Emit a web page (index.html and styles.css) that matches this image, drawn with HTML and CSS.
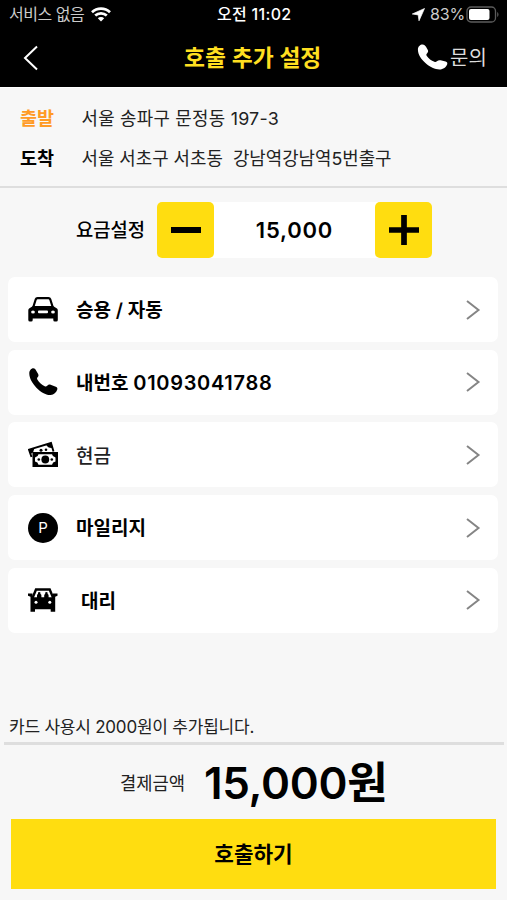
FILE: index.html
```html
<!DOCTYPE html>
<html lang="ko">
<head>
<meta charset="utf-8">
<title>호출 추가 설정</title>
<link rel="stylesheet" href="styles.css">
</head>
<body>
<svg class="defs" width="0" height="0" aria-hidden="true">
  <symbol id="phone" viewBox="0 0 30 26">
    <path d="M.4 5.500C.4 2.500 2.800.5 5 .5c1.800 0 2.700 1 3.500 2.300l1.700 3c.8 1.500.4 2.600-.7 3.700-.8.800-.8 1.500-.2 2.400 1.700 2.500 4.500 4.800 7.600 5.900 1 .4 1.700.2 2.500-.5 1.200-1 2.200-1.400 3.700-1l5 1.200c1.500.4 2 1.500 1.600 2.700-.9 2.800-4 5.300-7.700 5.300C13.500 25.300.4 15.200.4 5.500z"/>
  </symbol>
  <symbol id="chevron" viewBox="0 0 16 22">
    <path d="M2 2l11.500 9L2 20" fill="none" stroke="#858585" stroke-width="2"/>
  </symbol>
</svg>
<header class="top">
  <div class="status">
    <span class="carrier">서비스 없음</span>
    <svg class="wifi" width="20" height="15" viewBox="0 0 20 15">
      <path d="M1 5.300a13 13 0 0 1 18 0M4.200 8.600a8.400 8.400 0 0 1 11.600 0" fill="none" stroke="#fff" stroke-width="2.700"/>
      <path d="M6.800 11.300a4.600 4.600 0 0 1 6.400 0L10 14.600z" fill="#fff"/>
    </svg>
    <span class="clock">오전 11:02</span>
    <svg class="locate" width="13" height="13" viewBox="0 0 13 13"><path d="M12.500.5L.3 6l5.900.9.800 5.900z" fill="#fff" stroke="#fff" stroke-width=".7"/></svg>
    <span class="percent">83%</span>
    <svg class="battery" width="34" height="17" viewBox="0 0 34 17">
      <rect x="1" y="1" width="28.500" height="15" rx="4" fill="none" stroke="#5c5c5c" stroke-width="1.300"/>
      <rect x="3" y="3" width="20.500" height="11" rx="2" fill="#fff"/>
      <path d="M31.200 6v5c1.700-.8 1.700-4.200 0-5z" fill="#5c5c5c"/>
    </svg>
  </div>
  <div class="nav">
    <svg class="back" width="16" height="26" viewBox="0 0 16 26"><path d="M14 1.500L2 13l12 11.500" fill="none" stroke="#fff" stroke-width="2"/></svg>
    <h1 class="title">호출 추가 설정</h1>
    <svg class="call" width="31" height="26" fill="#fff"><use href="#phone"/></svg>
    <span class="ask">문의</span>
  </div>
</header>
<section class="route">
  <div class="stop"><b class="tag from">출발</b><span class="place start">서울 송파구 문정동 197-3</span></div>
  <div class="stop"><b class="tag">도착</b><span class="place">서울 서초구 서초동&nbsp; 강남역강남역5번출구</span></div>
</section>
<section class="fare">
  <span class="fare-label">요금설정</span>
  <div class="stepper">
    <button class="step"><svg width="32" height="32"><path d="M1 16h30" stroke="#000" stroke-width="6"/></svg></button>
    <span class="amount">15,000</span>
    <button class="step"><svg width="32" height="32"><path d="M1 16h30M16 1v30" stroke="#000" stroke-width="5.700"/></svg></button>
  </div>
</section>
<main class="options">
  <div class="card">
    <svg class="icon" width="30" height="30" viewBox="0 0 30 30">
      <path d="M5 13L7.700 4.500Q8.200 3.200 9.500 3.200h11q1.300 0 1.800 1.300L25 13" fill="none" stroke="#000" stroke-width="2.200"/>
      <path d="M5 11h20l4 2.500q.8.600.8 2v9.500q0 1.500-1.500 1.500h-1.500q-1.500 0-1.500-1.500v-1.500H4.700V25q0 1.500-1.500 1.500H2Q.3 26.500.3 25v-9.500q0-1.400.8-2z"/>
      <rect x="10" y="15.500" width="10" height="2.800" rx="1" fill="#fff"/>
      <ellipse cx="5" cy="17" rx="1.900" ry="1.600" fill="#fff"/><ellipse cx="25" cy="17" rx="1.900" ry="1.600" fill="#fff"/>
    </svg>
    <span class="label car">승용 / 자동</span>
    <svg class="go" width="16" height="22"><use href="#chevron"/></svg>
  </div>
  <div class="card">
    <svg class="icon" width="30" height="30" viewBox="0 0 30 30">
      <path d="M1.300 6.500C1.300 3.500 3.300 1.300 5.300 1.300c1.300 0 1.900.8 2.500 1.700l2.200 3.800c.8 1.400.6 2.500-.4 3.500-.7.800-.7 1.400-.1 2.400 1.700 2.700 4.200 5 7.200 6.500 1 .5 1.700.4 2.500-.4 1.100-1.100 2-1.500 3.400-1l5.200 2c1.500.6 1.900 1.700 1.400 3-1 2.700-3.300 4.900-6.500 5.200C14.300 28.800 1.300 16 1.300 6.500z"/>
    </svg>
    <span class="label mynum">내번호 <span class="digits">01093041788</span></span>
    <svg class="go" width="16" height="22"><use href="#chevron"/></svg>
  </div>
  <div class="card">
    <svg class="icon" width="30" height="30" viewBox="0 0 30 30">
      <path d="M3.500 17L1 9.700 23 3l2.500 8.500" fill="#fff" stroke="#000" stroke-width="1.900"/>
      <path d="M1 9.500l5.500-1.500-1.500 4.500L2.500 14zM18 4.500l5-1.500 1.500 5q-4.500.5-6.500-3.500z"/>
      <circle cx="13" cy="10.300" r="1.500"/><circle cx="18" cy="9.700" r="1.300"/>
      <rect x="4.500" y="12" width="25.500" height="15"/>
      <path d="M10.500 14.200h13.500q.5 2.800 3.500 3.300v4q-3 .5-3.500 3.300H10.500q-.5-2.800-3.500-3.300v-4q3-.5 3.500-3.300z" fill="#fff"/>
      <circle cx="17.300" cy="19.500" r="3.900"/><circle cx="10.800" cy="19.500" r="1.300"/><circle cx="23.800" cy="19.500" r="1.300"/>
    </svg>
    <span class="label cash">현금</span>
    <svg class="go" width="16" height="22"><use href="#chevron"/></svg>
  </div>
  <div class="card">
    <span class="icon point">P</span>
    <span class="label">마일리지</span>
    <svg class="go" width="16" height="22"><use href="#chevron"/></svg>
  </div>
  <div class="card">
    <svg class="icon" width="30" height="30" viewBox="0 0 30 30">
      <path d="M4.500 13L8 4.500h13.700L25.200 13" fill="none" stroke="#000" stroke-width="2.400"/>
      <path d="M0 8.500h4.500v3.800h20.500V8.500h4.500v2.300l-2.300 1v15h-4.500V24.300H7v2.500H2.500v-15L0 10.800z"/>
      <path d="M9 13v-2.500q0-1.500 1-1.500V7.500q1.200-1 2.400 0V9q1 0 1 1.500V13zM16.200 13v-2.500q0-1.500 1-1.500V7.500q1.200-1 2.400 0V9q1 0 1 1.500V13z"/>
      <circle cx="8" cy="17.300" r="1.500" fill="#fff"/><circle cx="21.800" cy="17.300" r="1.500" fill="#fff"/>
    </svg>
    <span class="label driver">대리</span>
    <svg class="go" width="16" height="22"><use href="#chevron"/></svg>
  </div>
</main>
<footer class="bottom">
  <p class="notice">카드 사용시 2000원이 추가됩니다.</p>
  <div class="total"><span class="total-label">결제금액</span><strong class="sum">15,000<span class="won">원</span></strong></div>
  <button class="submit">호출하기</button>
</footer>
</body>
</html>
```

FILE: styles.css
```css
* { box-sizing: border-box; }
body {
  margin: 0;
  height: 900px;
  display: flex;
  flex-direction: column;
  overflow: hidden;
  background: #f7f7f7;
  color: #000;
  font-family: Inter, "Noto Sans CJK KR", sans-serif;
}
span, b, strong, h1 { white-space: nowrap; }
svg { display: block; flex: none; }
.defs { display: none; }
button { border: 0; padding: 0; font-family: inherit; color: inherit; }

.top { height: 88px; background: #000; color: #fff; border-bottom: 1px solid #fff; }
.status { height: 29px; display: flex; align-items: center; padding-left: 9px; font-size: 16px; line-height: 29px; }
.carrier { width: 82px; color: #ccc; font-size: 16px; letter-spacing: -.5px; }
.wifi { margin-right: 106px; }
.clock { width: 195px; font-weight: 500; letter-spacing: .3px; }
.locate { margin-right: 5px; }
.percent { width: 36px; color: #ccc; letter-spacing: -.2px; }
.nav { height: 57px; display: flex; align-items: center; padding-left: 23px; }
.back { margin-right: 145px; }
.title { width: 233px; margin: 0; color: #ffdf20; font-size: 22.800px; line-height: 57px; font-weight: 600; }
.call { margin: 0 2px 2px 0; }
.ask { color: #ddd; font-size: 20px; line-height: 20px; }

.route { height: 100px; padding: 9px 20px 0; border-bottom: 2px solid #dedede; }
.stop { height: 40px; display: flex; align-items: center; }
.tag { width: 61.500px; font-size: 18.500px; font-weight: 700; }
.from { color: #ff9b25; }
.place { color: #222; font-size: 17.850px; }
.start { letter-spacing: .25px; }

.fare { height: 89px; padding: 14px 0 0 76px; display: flex; }
.fare-label { width: 81px; line-height: 57px; font-size: 18.800px; font-weight: 500; }
.stepper { width: 275px; height: 56px; display: flex; justify-content: space-between; align-items: center; background: #fff; border-radius: 5px; }
.step { width: 57px; height: 56px; border-radius: 5px; background: #ffdd10; display: flex; align-items: center; justify-content: center; }
.amount { font-size: 22px; font-weight: 600; letter-spacing: .8px; }

.options { padding: 0 9px 0 8px; display: flex; flex-direction: column; gap: 7.700px; }
.card { height: 65px; display: flex; align-items: center; padding: 0 17px 0 20px; background: #fff; border-radius: 7px; }
.icon { width: 30px; height: 30px; margin-right: 18px; }
.label { flex: 1; padding-bottom: 2px; font-size: 19px; font-weight: 600; }
.digits { font-size: 20px; letter-spacing: .7px; }
.cash { font-weight: 500; color: #222; padding-bottom: 0; }
.driver { padding-left: 5px; }
.point { display: flex; align-items: center; justify-content: center; border-radius: 50%; background: #000; color: #fff; font-size: 15px; }

.bottom { margin-top: auto; height: 186px; }
.notice { margin: 0 3px 0 4px; padding-left: 5px; height: 31px; line-height: 27px; border-bottom: 3px solid #dedede; font-size: 17px; letter-spacing: -.22px; color: #222; white-space: nowrap; }
.total { height: 74px; display: flex; align-items: center; padding-left: 120px; }
.total-label { width: 84px; font-size: 17.700px; color: #222; }
.sum { font-size: 44px; font-weight: 600; line-height: 60px; letter-spacing: -.3px; padding-top: 1px; }
.submit { display: block; width: 485px; height: 70px; margin-left: 11px; padding-bottom: 3px; background: #ffdd10; font-size: 21.300px; font-weight: 600; }
```
